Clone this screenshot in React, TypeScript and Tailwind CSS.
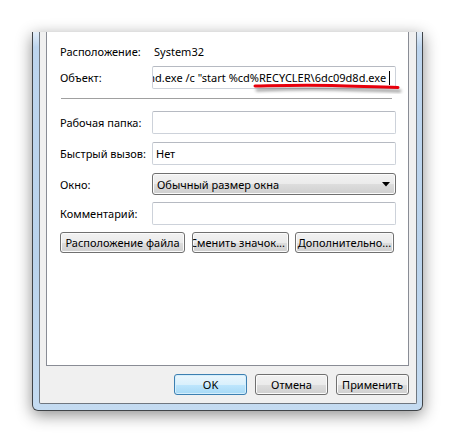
import React from "react";

const btn =
  "h-[21px] flex items-center justify-center rounded-[3px] border border-[#707070] bg-[linear-gradient(to_bottom,#f2f2f2_0%,#ebebeb_50%,#dddddd_51%,#cfcfcf_100%)] shadow-[inset_0_0_0_1px_#fbfbfb] text-black whitespace-nowrap overflow-hidden";

const input =
  "h-[23px] w-[244px] shrink-0 border border-[#cdd2da] border-t-[#b6bac2] rounded-[2px] bg-white flex items-center";

function Row({ label, children, className = "" }: { label: string; children: React.ReactNode; className?: string }) {
  return (
    <div className={"flex items-center " + className}>
      <div className="w-[92px] shrink-0 whitespace-nowrap">{label}</div>
      {children}
    </div>
  );
}

export default function App() {
  return (
    <div
      className="relative w-[456px] h-[443px] bg-white pl-[32px] pt-[32px] text-[11px] leading-[15px] text-black"
      style={{ fontFamily: '"Noto Sans", "Open Sans", sans-serif' }}
    >
      {/* window */}
      <div className="w-[391px] h-[379px] border-x border-b border-[#404448] rounded-b-[6px] bg-[linear-gradient(to_bottom,#e4eef8_0%,#bdd5ee_4%,#bad3ec_60%,#c4dbf1_100%)] pl-[6px] pr-[5px] pb-[6px] shadow-[0_4px_16px_rgba(0,0,0,0.45)]">
        <div className="h-full border-x border-b border-[#6f7780] rounded-b-[2px] bg-[#f0f0f0] pl-[6px] pr-[7px] flex flex-col">
          {/* tab page */}
          <div className="h-[334px] shrink-0 border-x border-b border-[#898c95] bg-white pl-[13px] pt-[8px] flex flex-col">
            <Row label="Расположение:" className="h-[23px]">
              <div className="pl-[2px]">System32</div>
            </Row>
            <Row label="Объект:" className="mt-[3px]">
              <div className={input + " overflow-hidden justify-end pr-[5px]"}>
                <span className="whitespace-pre">{'C:\\Windows\\System32\\cmd.exe /c "start %cd%RECYCLER\\6dc09d8d.exe '}</span>
                <span className="w-[1px] h-[14px] bg-black shrink-0" />
              </div>
            </Row>
            <div className="mt-[9px] ml-[1px] w-[331px] h-[1px] bg-[#a0a0a0]" />
            <Row label="Рабочая папка:" className="mt-[12px]">
              <div className={input} />
            </Row>
            <Row label="Быстрый вызов:" className="mt-[8px]">
              <div className={input + " pl-[3px]"}>Нет</div>
            </Row>
            <Row label="Окно:" className="mt-[8px]">
              <div className={btn + " !justify-between w-[244px] !h-[22px] pl-[4px] pr-[5px]"}>
                <span>Обычный размер окна</span>
                <svg width="8" height="5" viewBox="0 0 8 5">
                  <path d="M0 0H8L4 4.5Z" fill="#000" />
                </svg>
              </div>
            </Row>
            <Row label="Комментарий:" className="mt-[7px]">
              <div className={input} />
            </Row>
            <div className="mt-[7px] flex">
              <div className={btn + " w-[125px]"}>Расположение файла</div>
              <div className={btn + " w-[97px] ml-[7px] !justify-end pr-[3px]"}>Сменить значок...</div>
              <div className={btn + " w-[99px] ml-[6px]"}>Дополнительно...</div>
            </div>
          </div>
          {/* bottom buttons */}
          <div className="mt-[8px] flex justify-end gap-[8px]">
            <div className="h-[21px] w-[73px] flex items-center justify-center rounded-[3px] border border-[#3c7fb1] bg-[linear-gradient(to_bottom,#eaf6fd_0%,#d9f0fc_50%,#bee6fd_51%,#a7d9f5_100%)] shadow-[inset_0_0_0_1px_#d4eefc]">
              OK
            </div>
            <div className={btn + " w-[73px]"}>Отмена</div>
            <div className={btn + " w-[73px]"}>Применить</div>
          </div>
        </div>
      </div>

      {/* red hand-drawn underline */}
      <svg className="absolute left-[250px] top-[78px] pointer-events-none" width="165" height="22" viewBox="0 0 165 22">
        <defs>
          <filter id="blur" x="-10%" y="-100%" width="120%" height="300%">
            <feGaussianBlur stdDeviation="1.6" />
          </filter>
        </defs>
        <path
          d="M7 12 C 30 11, 55 10, 85 11 S 130 12, 150 13"
          stroke="rgba(0,0,0,0.38)"
          strokeWidth="3"
          fill="none"
          strokeLinecap="round"
          filter="url(#blur)"
        />
        <path
          d="M5 8 C 28 7.5, 52 6.5, 82 7.5 S 128 8.5, 148 9.5"
          stroke="#e8000c"
          strokeWidth="3"
          fill="none"
          strokeLinecap="round"
        />
      </svg>
    </div>
  );
}
